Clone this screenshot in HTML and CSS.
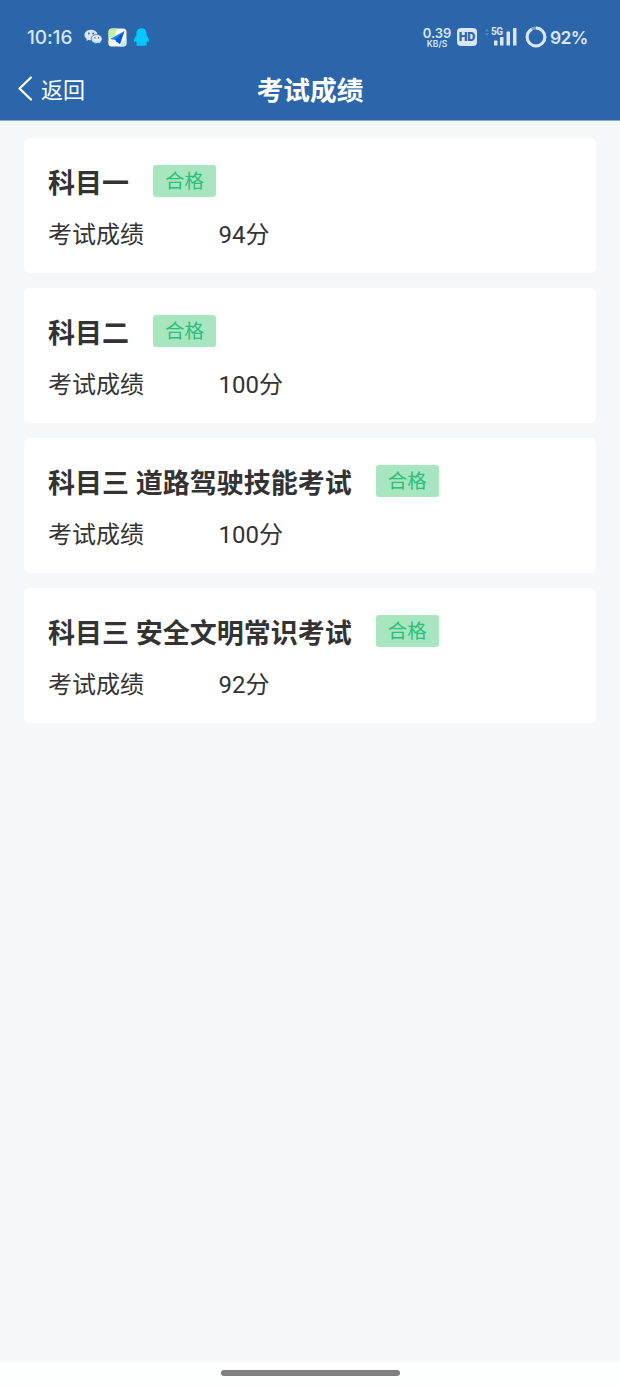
FILE: index.html
```html
<!DOCTYPE html>
<html lang="zh-CN">
<head>
    <meta charset="UTF-8">
    <meta name="viewport" content="width=device-width, initial-scale=1.0">
    <title>考试成绩</title>
    <link rel="stylesheet" href="styles.css">
</head>
<body>
    <header class="header">
        <div class="status-bar">
            <div class="status-left">
                <span class="time">10:16</span>
                <svg class="icon-wechat" width="19" height="16" viewBox="0 0 19 16">
                    <path fill="#dbe6f5" d="M7 .8C3.300.8.5 3 .5 6c0 1.700.9 3.100 2.300 4L2.200 12l2.300-1.100c.8.200 1.600.3 2.500.3C10.700 11.200 13.500 9 13.500 6S10.700.8 7 .8z"/>
                    <path fill="#dbe6f5" stroke="#2b65aa" stroke-width=".7" d="M12.700 5.400c-3.100 0-5.500 2-5.500 4.500s2.400 4.500 5.500 4.500c.7 0 1.300-.1 1.900-.3l2 1-.5-1.700c1.300-.8 2.100-2.100 2.100-3.500 0-2.500-2.400-4.500-5.500-4.500z"/>
                    <g fill="#2b65aa">
                        <circle cx="4.800" cy="4.500" r=".9"/>
                        <circle cx="9.200" cy="4.500" r=".9"/>
                        <circle cx="10.900" cy="8.700" r=".7"/>
                        <circle cx="14.500" cy="8.700" r=".7"/>
                    </g>
                </svg>
                <svg class="icon-map" width="19" height="19" viewBox="0 0 19 19">
                    <rect x=".5" y=".5" width="18" height="18" rx="3.500" fill="#f4fbff"/>
                    <path fill="#c5ef9c" d="M4 .5h5L7 8 .5 10V4A3.500 3.500 0 0 1 4 .5z"/>
                    <path fill="#fff0bd" d="M.5 13l4-1-1 6.500A3.500 3.500 0 0 1 .5 15z"/>
                    <path fill="#c4e8fc" d="M12 18.500l2.500-5 4-2V15a3.500 3.500 0 0 1-3.500 3.500z"/>
                    <path fill="#1b83f7" d="M16.500 3L2 11l5.500 1z"/>
                    <path fill="#0755d8" d="M16.500 3L7 11.500l1.200 2 3.800 2.800z"/>
                </svg>
                <svg class="icon-qq" width="17" height="18" viewBox="0 0 17 18">
                    <path fill="#07c6fc" d="M8.500.3C5.200.3 3.500 2.500 3.500 5.300v2C2 9.200.7 11.500.9 13.300c.1.900.9.800 1.800-.2.300.9.700 1.700 1.300 2.400-1.200.5-1.200 2.200.6 2.200h7.800c1.800 0 1.800-1.700.6-2.200.6-.7 1-1.500 1.300-2.400.9 1 1.700 1.100 1.800.2.200-1.800-1.100-4.100-2.600-6v-2C13.500 2.500 11.800.3 8.500.3z"/>
                </svg>
            </div>
            <div class="status-right">
                <div class="net-speed">
                    <span class="speed">0.39</span>
                    <span class="unit">KB/S</span>
                </div>
                <span class="hd">HD</span>
                <svg class="icon-signal" width="34" height="22" viewBox="0 0 34 22">
                    <path fill="#5586c2" d="M.8 5.200L3 2.500l2.200 2.700zM.8 7.200h4.400L3 9.900z"/>
                    <text class="signal-text" x="7" y="9">5G</text>
                    <g fill="#dbe6f5">
                        <rect x="10" y="14.500" width="3.500" height="5" rx=".6"/>
                        <rect x="16" y="11" width="3.500" height="8.500" rx=".6"/>
                        <rect x="22.500" y="5.500" width="3.500" height="14" rx=".6"/>
                        <rect x="29" y="2" width="3.500" height="17.500" rx=".6"/>
                    </g>
                </svg>
                <svg class="icon-battery" width="22" height="22" viewBox="0 0 22 22">
                    <circle cx="11" cy="11" r="8.900" fill="none" stroke="#7da3d2" stroke-width="3"/>
                    <circle cx="11" cy="11" r="8.900" fill="none" stroke="#dbe6f5" stroke-width="3" pathLength="100" stroke-dasharray="92 8" transform="rotate(-90 11 11)"/>
                </svg>
                <span class="battery-text">92%</span>
            </div>
        </div>
        <nav class="nav-bar">
            <a class="back">
                <svg width="17" height="27" viewBox="0 0 17 27">
                    <path d="M14 2.500L2.500 13.500l11.500 11" fill="none" stroke="#fff" stroke-width="2.300" stroke-linecap="round" stroke-linejoin="round"/>
                </svg>
                <span>返回</span>
            </a>
            <h1>考试成绩</h1>
        </nav>
    </header>

    <main class="results">
        <section class="card">
            <div class="card-title">
                <h2>科目一</h2>
                <span class="badge">合格</span>
            </div>
            <div class="score-row">
                <span class="label">考试成绩</span>
                <span>94分</span>
            </div>
        </section>
        <section class="card">
            <div class="card-title">
                <h2>科目二</h2>
                <span class="badge">合格</span>
            </div>
            <div class="score-row">
                <span class="label">考试成绩</span>
                <span>100分</span>
            </div>
        </section>
        <section class="card">
            <div class="card-title">
                <h2>科目三 道路驾驶技能考试</h2>
                <span class="badge">合格</span>
            </div>
            <div class="score-row">
                <span class="label">考试成绩</span>
                <span>100分</span>
            </div>
        </section>
        <section class="card">
            <div class="card-title">
                <h2>科目三 安全文明常识考试</h2>
                <span class="badge">合格</span>
            </div>
            <div class="score-row">
                <span class="label">考试成绩</span>
                <span>92分</span>
            </div>
        </section>
    </main>

    <footer class="home-bar">
        <div class="home-handle"></div>
    </footer>
</body>
</html>
```
FILE: styles.css
```css
* {
    box-sizing: border-box;
}
body {
    font-family: Roboto, "Noto Sans CJK SC", sans-serif;
    margin: 0;
    min-height: 1386px;
    display: flex;
    flex-direction: column;
    background: #f4f8fa;
    color: #333;
}
h1, h2 {
    margin: 0;
    font-size: 27px;
}
h1 {
    font-size: 26.7px;
}

/* header */
.header {
    height: 121px;
    background: #2b65aa;
    border-bottom: 1px solid #84a8d0;
    color: white;
}
.status-bar {
    height: 60px;
    padding: 14px 33px 0 27px;
    display: flex;
    justify-content: space-between;
    align-items: center;
    color: #dbe6f5;
    font-family: Inter, sans-serif;
}
.status-left, .status-right {
    display: flex;
    align-items: center;
}
.time {
    width: 57px;
    font-size: 19px;
    font-weight: 500;
    letter-spacing: -0.1px;
}
.icon-map {
    margin: 0 6px 0 5px;
}
.net-speed {
    display: flex;
    flex-direction: column;
    align-items: center;
    width: 28px;
    margin-right: 6px;
}
.speed {
    font-size: 13px;
    line-height: 13px;
    font-weight: 600;
}
.unit {
    font-size: 8.5px;
    line-height: 8px;
    font-weight: 600;
}
.hd {
    width: 20px;
    height: 18px;
    margin-right: 7px;
    border-radius: 4px;
    background: #dbe6f5;
    color: #2b65aa;
    font-family: Roboto, sans-serif;
    font-size: 12.5px;
    font-weight: 900;
    line-height: 18px;
    text-align: center;
    letter-spacing: -0.3px;
}
.signal-text {
    fill: #dbe6f5;
    font-family: Roboto, sans-serif;
    font-size: 10px;
    font-weight: 700;
    letter-spacing: -0.5px;
}
.icon-battery {
    margin: 0 3px 0 7px;
}
.battery-text {
    width: 37px;
    font-size: 17.5px;
    font-weight: 600;
    letter-spacing: -0.7px;
}
.nav-bar {
    height: 56px;
    padding: 0 17px;
    display: grid;
    grid-template-columns: 1fr auto 1fr;
    align-items: center;
}
.back {
    display: flex;
    align-items: center;
    gap: 7px;
    font-size: 22px;
}

/* score cards */
.results {
    flex: 1;
    padding: 17px 24px;
    display: flex;
    flex-direction: column;
    gap: 15px;
}
.card {
    height: 135px;
    padding: 27px 24px 0;
    background: white;
    border-radius: 6px;
}
.card-title {
    display: flex;
    align-items: center;
    gap: 24px;
    height: 32px;
}
.badge {
    height: 32px;
    padding: 0 12px;
    border-radius: 3px;
    background: #a8e6bf;
    color: #2dbd7c;
    font-size: 19.5px;
    line-height: 34px;
}
.score-row {
    display: flex;
    margin-top: 20px;
    font-size: 24px;
    line-height: 36px;
}
.label {
    width: 170.5px;
}

/* bottom gesture bar */
.home-bar {
    height: 24px;
    padding-top: 8px;
    background: #fdfefe;
}
.home-handle {
    width: 179px;
    height: 6px;
    margin: 0 auto;
    border-radius: 3px;
    background: #808080;
}
```
